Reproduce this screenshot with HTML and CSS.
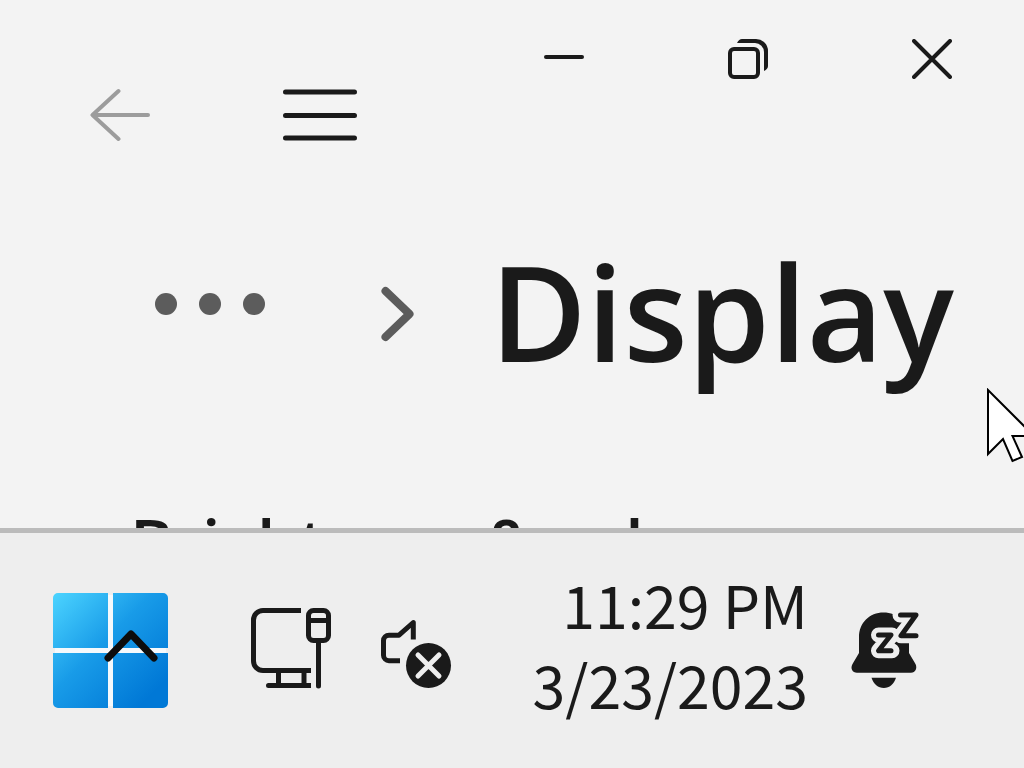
FILE: index.html
```html
<!DOCTYPE html>
<html lang="en">
<head>
    <meta charset="UTF-8">
    <meta name="viewport" content="width=device-width, initial-scale=1.0">
    <title>Display</title>
    <link rel="stylesheet" href="styles.css">
</head>
<body>

    <!-- Settings window -->
    <main class="window">
        <header class="title-bar">
            <nav class="nav-buttons">
                <button class="nav-button back" aria-label="Back" disabled>
                    <svg width="60" height="54" viewBox="0 0 60 54"><path d="M28.500 3L2.500 27l26 24M3 27h55"/></svg>
                </button>
                <button class="nav-button menu" aria-label="Menu">
                    <svg width="74" height="54" viewBox="0 0 74 54"><path d="M2.500 4h69M2.500 27.500h69M2.500 50h69"/></svg>
                </button>
            </nav>
            <div class="window-controls">
                <button aria-label="Minimize">
                    <svg width="40" height="40" viewBox="0 0 40 40"><path d="M2 18h36"/></svg>
                </button>
                <button aria-label="Restore">
                    <svg width="40" height="40" viewBox="0 0 40 40">
                        <rect x="2" y="10" width="28" height="28" rx="4"/>
                        <path class="solid" d="M9 4Q11 0 14 0H28A12 12 0 0 1 40 12V27Q40 30 36 32V13A9 9 0 0 0 27 4z"/>
                    </svg>
                </button>
                <button aria-label="Close">
                    <svg width="40" height="40" viewBox="0 0 40 40"><path d="M2 2l36 36M38 2L2 38"/></svg>
                </button>
            </div>
        </header>

        <div class="breadcrumb">
            <button class="more" aria-label="More">
                <svg width="110" height="22" viewBox="0 0 110 22">
                    <circle cx="11" cy="11" r="11"/>
                    <circle cx="55" cy="11" r="11"/>
                    <circle cx="99" cy="11" r="11"/>
                </svg>
            </button>
            <svg class="separator" width="34" height="56" viewBox="0 0 34 56"><path d="M5.500 5l24 23-24 23"/></svg>
            <h1>Display</h1>
        </div>

        <h2>Brightness &amp; color</h2>
    </main>

    <!-- Taskbar -->
    <footer class="taskbar">
        <div class="start-area">
            <button class="start" aria-label="Start">
                <svg width="115" height="115" viewBox="0 0 115 115">
                    <defs>
                        <linearGradient id="logo" gradientUnits="userSpaceOnUse" x1="0" y1="0" x2="100" y2="100">
                            <stop offset="0" stop-color="#4cd4ff"/>
                            <stop offset="0.5" stop-color="#189be8"/>
                            <stop offset="1" stop-color="#0078d6"/>
                        </linearGradient>
                    </defs>
                    <rect class="gap" x="2" y="2" width="111" height="111"/>
                    <path fill="url(#logo)" d="M5 0h50v55H0V5a5 5 0 0 1 5-5zM60 0h50a5 5 0 0 1 5 5v50H60zM0 60h55v55H5a5 5 0 0 1-5-5zM60 60h55v50a5 5 0 0 1-5 5H60z"/>
                </svg>
            </button>
            <button class="hidden-icons" aria-label="Show hidden icons">
                <svg width="54" height="32" viewBox="0 0 54 32"><path d="M4 28L27 4l23 24"/></svg>
            </button>
        </div>

        <div class="tray">
            <button aria-label="Network">
                <svg width="82" height="82" viewBox="0 0 82 82">
                    <path class="flat" d="M51 3.500H13a9.500 9.500 0 0 0-9.500 9.500v41a9.500 9.500 0 0 0 9.500 9.500h48M28.500 64v14M54 64v14M40 78.500h21"/>
                    <path d="M18.500 78.500h25M68.500 34v45"/>
                    <rect x="58.500" y="3.500" width="20" height="30" rx="5"/>
                    <path d="M59 13.500h19"/>
                </svg>
            </button>
            <button aria-label="Volume muted">
                <svg width="72" height="82" viewBox="0 -11 72 82">
                    <path class="flat" d="M33.300 21.500V4.500L19 17.200H9a5.500 5.500 0 0 0-5.500 5.500v14.500a5.500 5.500 0 0 0 5.500 5.500h11"/>
                    <circle class="solid" cx="48.500" cy="47.500" r="22.500"/>
                    <path class="cross" d="M38 37l21 21M59 37L38 58"/>
                </svg>
            </button>
        </div>

        <button class="clock">
            <time>11:29 PM</time>
            <time datetime="2023-03-23">3/23/2023</time>
        </button>

        <button class="notifications" aria-label="Notifications">
            <svg width="72" height="82" viewBox="0 -3 72 82">
                <path class="solid" d="M33.500 2.500C19.500 2.500 9 13 9 27v16L2.500 54c-2.500 4.500 0 8.700 4.500 8.700h54c4.500 0 6.500-4.500 4.500-8.700L59 43V27C59 13 47.500 2.500 33.500 2.500z"/>
                <path class="solid" d="M21.500 67.700h24.500c-2 6.300-6.500 10.300-12.200 10.300s-10.300-4-12.300-10.300z"/>
                <path class="halo" d="M50 5h17L51 25.700h16M28.500 25h13.500L28.500 40.700h13.500"/>
                <path d="M50.500 5H66L51 25.700h15M28.500 25h12.500L28.500 40.700h12.500"/>
            </svg>
        </button>
    </footer>

    <!-- Mouse pointer -->
    <svg class="pointer" width="50" height="76" viewBox="0 0 50 76"><path d="M1 2v64l15-15 9.500 22 9.500-4-9.500-21H47z"/></svg>

</body>
</html>
```
FILE: styles.css
```css
* {
    box-sizing: border-box;
}

body {
    margin: 0;
    height: 100vh;
    display: flex;
    flex-direction: column;
    position: relative;
    overflow: hidden;
    font-family: "Open Sans", "Noto Sans", sans-serif;
    color: #1a1a1a;
    background-color: #f3f3f3;
}

button {
    display: flex;
    align-items: center;
    justify-content: center;
    padding: 0;
    border: none;
    background: none;
    color: inherit;
    font: inherit;
}

svg {
    display: block;
    flex-shrink: 0;
    fill: none;
    stroke: currentColor;
    stroke-width: 4;
    stroke-linecap: round;
    stroke-linejoin: round;
}

.solid {
    fill: currentColor;
    stroke: none;
}

/* Settings window */
.window {
    flex: 1;
    min-height: 0;
    overflow: hidden;
}

.title-bar {
    display: flex;
    justify-content: space-between;
    align-items: flex-start;
}

.nav-buttons {
    display: flex;
    padding: 65px 0 0 20px;
}

.nav-button {
    width: 200px;
    height: 100px;
}

.back {
    color: #9c9c9c;
}

.menu svg {
    stroke-width: 5;
}

.window-controls {
    display: flex;
}

.window-controls button {
    width: 184px;
    height: 118px;
}

.breadcrumb {
    display: flex;
    align-items: center;
    margin-top: 46px;
    padding-left: 155px;
}

.more {
    color: #5c5c5c;
    padding-bottom: 20px;
}

.more svg {
    fill: currentColor;
    stroke: none;
}

.separator {
    margin: 0 76px 0 115px;
    color: #5c5c5c;
    stroke-width: 8;
}

h1 {
    margin: 0;
    padding-bottom: 6px;
    font-size: 132px;
    line-height: 200px;
    font-weight: 600;
}

h2 {
    margin: 84px 0 0 130px;
    font-size: 66px;
    line-height: 80px;
    font-weight: 600;
    white-space: nowrap;
}

/* Taskbar */
.taskbar {
    display: flex;
    align-items: center;
    height: 240px;
    padding: 0 102px 0 53px;
    border-top: 5px solid #bbbbbb;
    background-color: #eeeeee;
}

.start-area {
    position: relative;
}

.start svg {
    stroke: none;
}

.gap {
    fill: #f5f9fc;
}

.hidden-icons {
    position: absolute;
    top: 37px;
    left: 51px;
    color: #0c0c0c;
}

.hidden-icons svg {
    stroke-width: 7;
}

.tray {
    display: flex;
    gap: 48px;
    margin: 0 auto 0 82px;
    padding-bottom: 5px;
}

.tray svg,
.notifications svg {
    stroke-width: 5;
}

.tray .flat {
    stroke-linecap: butt;
}

.cross {
    stroke: #eeeeee;
}

.clock {
    flex-direction: column;
    align-items: flex-end;
    margin-right: 42px;
    padding-bottom: 14px;
    font-family: "Noto Sans CJK JP", "Noto Sans", sans-serif;
    font-size: 59px;
    line-height: 80px;
    white-space: nowrap;
}

.notifications {
    padding-bottom: 5px;
}

.halo {
    stroke: #eeeeee;
    stroke-width: 15;
}

/* Mouse pointer */
.pointer {
    position: absolute;
    top: 388px;
    right: -13px;
    fill: #ffffff;
    stroke: #000000;
    stroke-width: 2;
    stroke-linejoin: miter;
}
```
